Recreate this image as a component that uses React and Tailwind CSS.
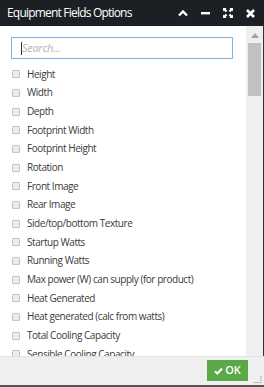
import React from "react";

const fields = [
  "Height",
  "Width",
  "Depth",
  "Footprint Width",
  "Footprint Height",
  "Rotation",
  "Front Image",
  "Rear Image",
  "Side/top/bottom Texture",
  "Startup Watts",
  "Running Watts",
  "Max power (W) can supply (for product)",
  "Heat Generated",
  "Heat generated (calc from watts)",
  "Total Cooling Capacity",
  "Sensible Cooling Capacity",
  "Latent Cooling Capacity",
];

export default function App() {
  return (
    <div
      className="w-[264px] h-[387px] flex flex-col bg-white overflow-hidden"
      style={{ fontFamily: '"Open Sans", sans-serif' }}
    >
      {/* title bar */}
      <div className="h-[26px] shrink-0 bg-[#1c1f23] flex items-center pl-[7px] pr-[9px]">
        <span className="text-white text-[12px] tracking-[-0.8px] flex-1">Equipment Fields Options</span>
        <div className="flex items-center gap-[13px] text-white">
          <svg width="10" height="8" viewBox="0 0 10 8">
            <path d="M1 6.5 L5 2.5 L9 6.5" stroke="white" strokeWidth="2.4" fill="none" />
          </svg>
          <svg width="9" height="8" viewBox="0 0 9 8">
            <rect x="0" y="3" width="9" height="2.4" fill="white" />
          </svg>
          <svg width="10" height="10" viewBox="0 0 10 10">
            <path d="M0 0h3.5L2.6 1 4.3 2.7 2.7 4.3 1 2.6 0 3.5z" fill="white" />
            <path d="M10 0v3.5L9 2.6 7.3 4.3 5.7 2.7 7.4 1 6.5 0z" fill="white" />
            <path d="M0 10V6.5l1 0.9 1.7-1.7 1.6 1.6L2.6 9 3.5 10z" fill="white" />
            <path d="M10 10H6.5l0.9-1 -1.7-1.7 1.6-1.6L9 7.4 10 6.5z" fill="white" />
          </svg>
          <svg width="9" height="9" viewBox="0 0 9 9">
            <path d="M1 1 L8 8 M8 1 L1 8" stroke="white" strokeWidth="2.6" />
          </svg>
        </div>
      </div>

      {/* body */}
      <div className="flex-1 flex min-h-0">
        <div className="flex-1 min-w-0 overflow-hidden pl-[11px] pr-[13px] pt-[11px]">
          <div className="h-[22px] border border-[#7eb3e3] flex items-center pl-[9px]">
            <span className="w-px h-[13px] bg-[#333]" />
            <span className="text-[11px] italic text-[#b5b5b5] tracking-[-0.3px]">Search...</span>
          </div>
          <div className="pt-[6px]">
            {fields.map((f) => (
              <div key={f} className="h-[18.67px] flex items-center whitespace-nowrap">
                <span className="w-[8px] h-[8px] border border-[#c4c4c4] bg-[#ececec] rounded-[1px] ml-[1px] mr-[7px] shrink-0" />
                <span className="text-[10px] text-[#3a3a3a] tracking-[-0.45px]">{f}</span>
              </div>
            ))}
          </div>
        </div>
        {/* scrollbar */}
        <div className="w-[17px] bg-[#efefef] flex flex-col items-center shrink-0">
          <div className="h-[17px] flex items-center justify-center pt-[2px]">
            <svg width="8" height="5" viewBox="0 0 8 5">
              <path d="M0 5 L4 0 L8 5z" fill="#a3a3a3" />
            </svg>
          </div>
          <div className="w-[13px] h-[53px] bg-[#c1c1c1]" />
        </div>
        <div className="w-px bg-[#333] shrink-0" />
      </div>

      {/* footer */}
      <div className="h-[31px] shrink-0 bg-[#efefef] border-t border-[#e2e2e2] flex items-start pt-[3px] relative">
        <div className="flex-1" />
        <button className="h-[21px] w-[41px] mr-[16px] bg-[#5aa847] text-white text-[11px] font-semibold flex items-center justify-center gap-[2px]">
          <svg width="9" height="8" viewBox="0 0 9 8">
            <path d="M1 4.2 L3.4 6.5 L8 1.5" stroke="white" strokeWidth="2" fill="none" />
          </svg>
          OK
        </button>
        <div className="absolute right-[2px] bottom-[3px] w-[8px] h-[8px]">
          <svg width="8" height="8" viewBox="0 0 8 8">
            <path d="M7 0v1M7 2v1M7 4v1M7 6v1M5 6v1M3 6v1M1 6v1" stroke="#888" strokeWidth="1" />
          </svg>
        </div>
        <div className="absolute left-0 right-0 bottom-0 h-[2px] bg-[#555]" />
      </div>
    </div>
  );
}
